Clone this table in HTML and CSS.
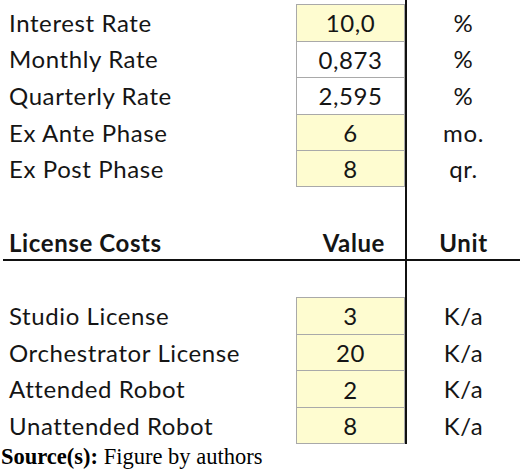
FILE: index.html
```html
<!DOCTYPE html>
<html>
<head>
<meta charset="utf-8">
<link rel="stylesheet" href="styles.css">
</head>
<body>
<div class="sheet">
  <div class="spacer"></div>

  <div class="label">Interest Rate</div><div class="val input">10,0</div><div class="unit">%</div>
  <div class="label">Monthly Rate</div><div class="val calc">0,873</div><div class="unit">%</div>
  <div class="label">Quarterly Rate</div><div class="val calc">2,595</div><div class="unit">%</div>
  <div class="label">Ex Ante Phase</div><div class="val input">6</div><div class="unit">mo.</div>
  <div class="label">Ex Post Phase</div><div class="val input last">8</div><div class="unit">qr.</div>

  <div class="gap"></div>

  <div class="label head">License Costs</div><div class="val head right">Value</div><div class="unit head">Unit</div>
  <div class="hline"></div>

  <div class="gap2"></div>

  <div class="label">Studio License</div><div class="val input">3</div><div class="unit">K/a</div>
  <div class="label">Orchestrator License</div><div class="val input">20</div><div class="unit">K/a</div>
  <div class="label">Attended Robot</div><div class="val input">2</div><div class="unit">K/a</div>
  <div class="label">Unattended Robot</div><div class="val input last">8</div><div class="unit">K/a</div>

  <div class="source"><b>Source(s):</b> Figure by authors</div>
  <div class="vline"></div>
</div>
</body>
</html>
```

FILE: styles.css
```css
html, body {
  margin: 0;
  padding: 0;
  background: #ffffff;
}

.sheet {
  display: grid;
  grid-template-columns: 296px 109px 2px 1fr;
  grid-template-rows: 4px repeat(5, 36.6px) 37px 35px 2px 36px repeat(4, 36.75px) auto;
  width: 520px;
  font-family: Lato, "Open Sans", sans-serif;
  font-size: 24px;
  letter-spacing: 0.6px;
  color: #151515;
}

.spacer { grid-column: 1 / 3; grid-row: 1; }
.gap { grid-column: 1 / 3; grid-row: 7; }
.gap2 { grid-column: 1 / 3; grid-row: 10; }

.vline {
  grid-column: 3;
  grid-row: 1 / 15;
  background: #111111;
  z-index: 1;
}

.label {
  grid-column: 1;
  display: flex;
  align-items: center;
  padding-left: 9px;
  white-space: nowrap;
}

.val {
  grid-column: 2;
  display: flex;
  align-items: center;
  justify-content: center;
  box-sizing: border-box;
}

.input, .calc {
  border-top: 1px solid #a9a9a9;
  border-left: 1px solid #a9a9a9;
  border-right: 1px solid #a9a9a9;
}

.input { background: #fefcd0; }
.calc { background: #ffffff; }
.last { border-bottom: 1px solid #a9a9a9; }

.unit {
  grid-column: 4;
  display: flex;
  align-items: center;
  justify-content: center;
}

.head {
  font-weight: 700;
  align-items: flex-end;
  padding-bottom: 2px;
}

.right {
  justify-content: flex-end;
  padding-right: 20px;
}

.hline {
  grid-column: 1 / 5;
  grid-row: 9;
  margin-left: 3px;
  background: #111111;
}

.source {
  grid-column: 1 / 5;
  grid-row: 15;
  font-family: "Liberation Serif", "Times New Roman", serif;
  font-size: 22.5px;
  letter-spacing: 0;
  color: #000;
  padding-left: 1px;
  line-height: 26px;
}
```
